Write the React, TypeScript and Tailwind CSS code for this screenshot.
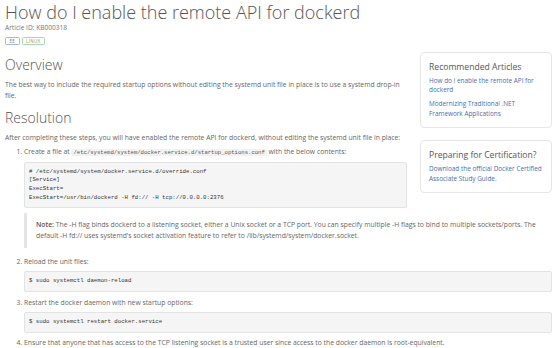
const sans = { fontFamily: '"Open Sans", "Noto Sans", sans-serif' };

const Badge = ({ label, tone }: { label: string; tone: "blue" | "green" }) => (
  <span
    className={
      tone === "blue"
        ? "inline-flex h-[8px] items-center rounded-[1.5px] border border-[#9fb6e6] px-[3.5px] text-[4.5px] tracking-[0.3px] uppercase leading-none text-[#6b7fa8]"
        : "inline-flex h-[8px] items-center rounded-[1.5px] border border-[#a9d6ad] px-[3.5px] text-[4.5px] tracking-[0.3px] uppercase leading-none text-[#7a9a7e]"
    }
  >
    {label}
  </span>
);

const Code = ({ lines }: { lines: string[] }) => (
  <pre className="mt-[4px] overflow-auto rounded-[2px] border border-[#e3e3e3] bg-[#f5f5f5] px-[4px] py-[5px] font-['Liberation_Mono',monospace] text-[5.7px] leading-[8.7px] text-[#333]">
    {lines.join("\n")}
  </pre>
);

const Card = ({ title, links }: { title: string; links: string[] }) => (
  <div className="rounded-[4px] border border-[#e6e6e6] bg-white px-[8px] pt-[8px] pb-[9px]">
    <h3 className="text-[8.6px] leading-[12px] text-[#555]">{title}</h3>
    <div className="mt-[3px] flex flex-col gap-[4.6px]">
      {links.map((l) => (
        <a key={l} className="block text-[6.4px] leading-[9.4px] text-[#4a6ea9]">
          {l}
        </a>
      ))}
    </div>
  </div>
);

export default function App() {
  return (
    <div
      className="h-[348px] w-[556px] overflow-hidden bg-white pl-[5px] pr-[4px] text-[6.8px] text-[#666]"
      style={sans}
    >
      <h1 className="pt-[1px] text-[18px] font-light leading-[22px] text-[#555]">
        How do I enable the remote API for dockerd
      </h1>
      <div className="text-[6.6px] leading-[10px] text-[#777]">Article ID: KB000318</div>
      <div className="mt-[4px] flex gap-[2px]">
        <Badge label="EE" tone="blue" />
        <Badge label="Linux" tone="green" />
      </div>

      <aside className="float-right mt-[7px] ml-[13px] flex w-[132px] flex-col gap-[12px]">
        <Card
          title="Recommended Articles"
          links={[
            "How do I enable the remote API for dockerd",
            "Modernizing Traditional .NET Framework Applications",
          ]}
        />
        <Card
          title="Preparing for Certification?"
          links={["Download the official Docker Certified Associate Study Guide."]}
        />
      </aside>

      <h2 className="mt-[11px] text-[14px] font-light leading-[18px] text-[#555]">Overview</h2>
      <p className="mt-[5px] pr-[16px] leading-[11.3px]">
        The best way to include the required startup options without editing the systemd unit
        file in place is to use a systemd drop-in file.
      </p>

      <h2 className="mt-[7px] text-[14px] font-light leading-[18px] text-[#555]">Resolution</h2>
      <p className="mt-[5px] leading-[11px]">
        After completing these steps, you will have enabled the remote API for dockerd, without
        editing the systemd unit file in place:
      </p>

      <ol className="mt-[3px] list-decimal pl-[19px] leading-[11px]">
        <li>
          Create a file at{" "}
          <code className="rounded-[1px] bg-[#f2f2f2] px-[2px] font-['Liberation_Mono',monospace] text-[5.6px] text-[#555]">
            /etc/systemd/system/docker.service.d/startup_options.conf
          </code>{" "}
          with the below contents:
          <Code
            lines={[
              "# /etc/systemd/system/docker.service.d/override.conf",
              "[Service]",
              "ExecStart=",
              "ExecStart=/usr/bin/dockerd -H fd:// -H tcp://0.0.0.0:2376",
            ]}
          />
          <blockquote className="mt-[5px] border-l-[3px] border-[#e4e4e4] py-[7px] pr-[4px] pl-[9px] leading-[10.5px]">
            <strong className="font-semibold text-[#555]">Note:</strong> The -H flag binds dockerd
            to a listening socket, either a Unix socket or a TCP port. You can specify multiple -H
            flags to bind to multiple sockets/ports. The default -H fd:// uses systemd's socket
            activation feature to refer to /lib/systemd/system/docker.socket.
          </blockquote>
        </li>
        <li className="mt-[8px]">
          Reload the unit files:
          <Code lines={["$ sudo systemctl daemon-reload"]} />
        </li>
        <li className="mt-[5px]">
          Restart the docker daemon with new startup options:
          <Code lines={["$ sudo systemctl restart docker.service"]} />
        </li>
        <li className="mt-[4px]">
          Ensure that anyone that has access to the TCP listening socket is a trusted user since
          access to the docker daemon is root-equivalent.
        </li>
      </ol>
    </div>
  );
}
